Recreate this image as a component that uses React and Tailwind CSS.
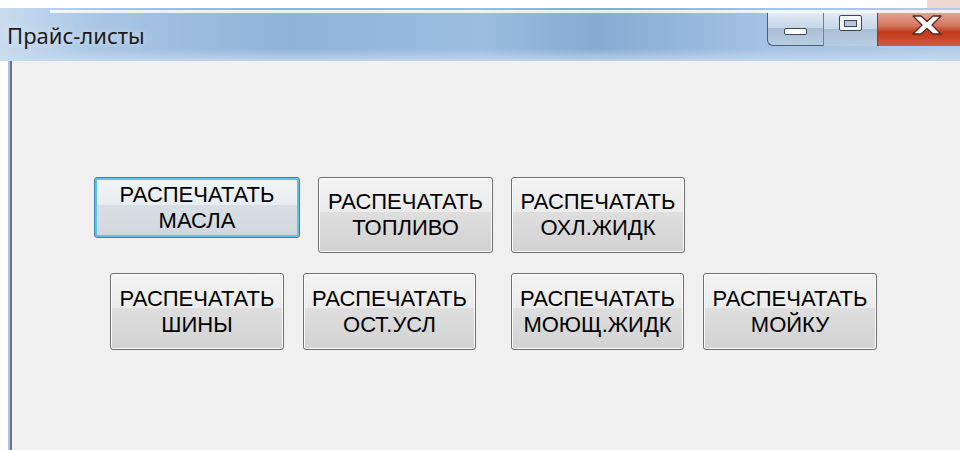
import React from 'react';

// Win7-style push button used for every price list
function PrintButton({ label, focused = false, className = '' }) {
    const base = 'flex flex-col items-center justify-center rounded-[3px] border text-[22px] leading-[26px] text-black font-["Liberation_Sans",Arial,sans-serif]';
    const look = focused
        ? 'border-[#3c7fb1] bg-[linear-gradient(to_bottom,#f1f4f6_0%,#e8edf1_46%,#d8dfe4_46%,#d0d8de_100%)] shadow-[inset_0_0_0_2px_#58c2f2]'
        : 'border-[#707070] bg-[linear-gradient(to_bottom,#f3f3f3_0%,#ebebeb_46%,#dedede_46%,#d2d2d2_100%)] shadow-[inset_0_0_0_1px_#fbfbfb]';
    return (
        <div className={`${base} ${look} ${className}`}>
            <span>РАСПЕЧАТАТЬ</span>
            <span>{label}</span>
        </div>
    );
}

function CaptionButtons() {
    return (
        <div className="flex h-[34px] mt-[4px] ml-auto">
            {/* minimise */}
            <div className="w-[56px] h-full flex items-end justify-center pb-[10px] border border-t-0 border-r-0 border-[#4d5d73] rounded-bl-[6px] bg-[linear-gradient(to_bottom,#e4ecf5_0%,#c5d5e6_50%,#a9bed5_50%,#b9cde2_100%)]">
                <div className="w-[23px] h-[7px] rounded-[2px] bg-white border border-[#3b4756]"></div>
            </div>
            {/* maximise */}
            <div className="w-[54px] h-full flex justify-center pt-[3px] border-l border-[#6f8198] bg-[linear-gradient(to_bottom,#e4ecf5_0%,#c5d5e6_50%,#a9bed5_50%,#b9cde2_100%)]">
                <div className="w-[23px] h-[16px] rounded-[2px] border border-[#3b4756] bg-[#f4f6f9] flex items-center justify-center">
                    <div className="w-[13px] h-[7px] border border-[#3b4756] bg-[#b8c8da]"></div>
                </div>
            </div>
            {/* close */}
            <div className="w-[83px] h-full flex justify-center pt-[2px] pl-[16px] border-l border-[#8d3a2c] bg-[linear-gradient(to_bottom,#e4a696_0%,#d5765f_40%,#c2391d_60%,#d25a3c_100%)]">
                <svg width="32" height="22" viewBox="0 0 32 22">
                    <path d="M2 2 L10 2 L16 7.5 L22 2 L30 2 L21 11 L30 20 L22 20 L16 14.5 L10 20 L2 20 L11 11 Z" fill="#ffffff" stroke="#5a2418" strokeWidth="1.3" strokeLinejoin="round" />
                </svg>
            </div>
        </div>
    );
}

export default function App() {
    return (
        <div className="w-[960px] h-[450px] bg-white flex flex-col overflow-hidden">
            {/* strip above the caption */}
            <div className="h-[8px] flex">
                <div className="ml-auto w-[33px] bg-[#f1d8d2]"></div>
            </div>

            {/* caption bar */}
            <div className="relative h-[53px] flex items-start bg-[linear-gradient(to_right,#c9dcef_0%,#a9c6e4_10%,#8fb2d9_30%,#9cbde1_50%,#86aad3_62%,#a5c3e4_80%,#b2cbe6_100%)]">
                <div className="absolute inset-x-0 top-[2px] h-[3px] ml-[50px] bg-white/80"></div>
                <div className="absolute inset-x-0 bottom-0 h-[12px] bg-[linear-gradient(to_bottom,rgba(255,255,255,0),rgba(200,220,240,0.8))]"></div>
                <span className="relative pt-[12px] pl-[7px] text-[22px] leading-[30px] text-[#1b1b1b] font-['Noto_Sans',sans-serif] [text-shadow:0_0_8px_rgba(235,242,250,0.9)]">
                    Прайс-листы
                </span>
                <CaptionButtons />
            </div>

            {/* client area */}
            <div className="flex-1 flex">
                <div className="w-[8px] bg-white"></div>
                <div className="w-[2px] bg-[#aec3da]"></div>
                <div className="w-[2px] bg-[#66778d]"></div>
                <div className="flex-1 bg-[#f0f0f0] flex flex-col pt-[116px]">
                    <div className="flex items-start">
                        <PrintButton label="МАСЛА" focused className="ml-[82px] w-[206px] h-[61px]" />
                        <PrintButton label="ТОПЛИВО" className="ml-[18px] w-[175px] h-[76px]" />
                        <PrintButton label="ОХЛ.ЖИДК" className="ml-[18px] w-[174px] h-[76px]" />
                    </div>
                    <div className="flex items-start mt-[20px]">
                        <PrintButton label="ШИНЫ" className="ml-[98px] w-[174px] h-[77px]" />
                        <PrintButton label="ОСТ.УСЛ" className="ml-[19px] w-[173px] h-[77px]" />
                        <PrintButton label="МОЮЩ.ЖИДК" className="ml-[35px] w-[173px] h-[77px]" />
                        <PrintButton label="МОЙКУ" className="ml-[19px] w-[174px] h-[77px]" />
                    </div>
                </div>
            </div>
        </div>
    );
}
